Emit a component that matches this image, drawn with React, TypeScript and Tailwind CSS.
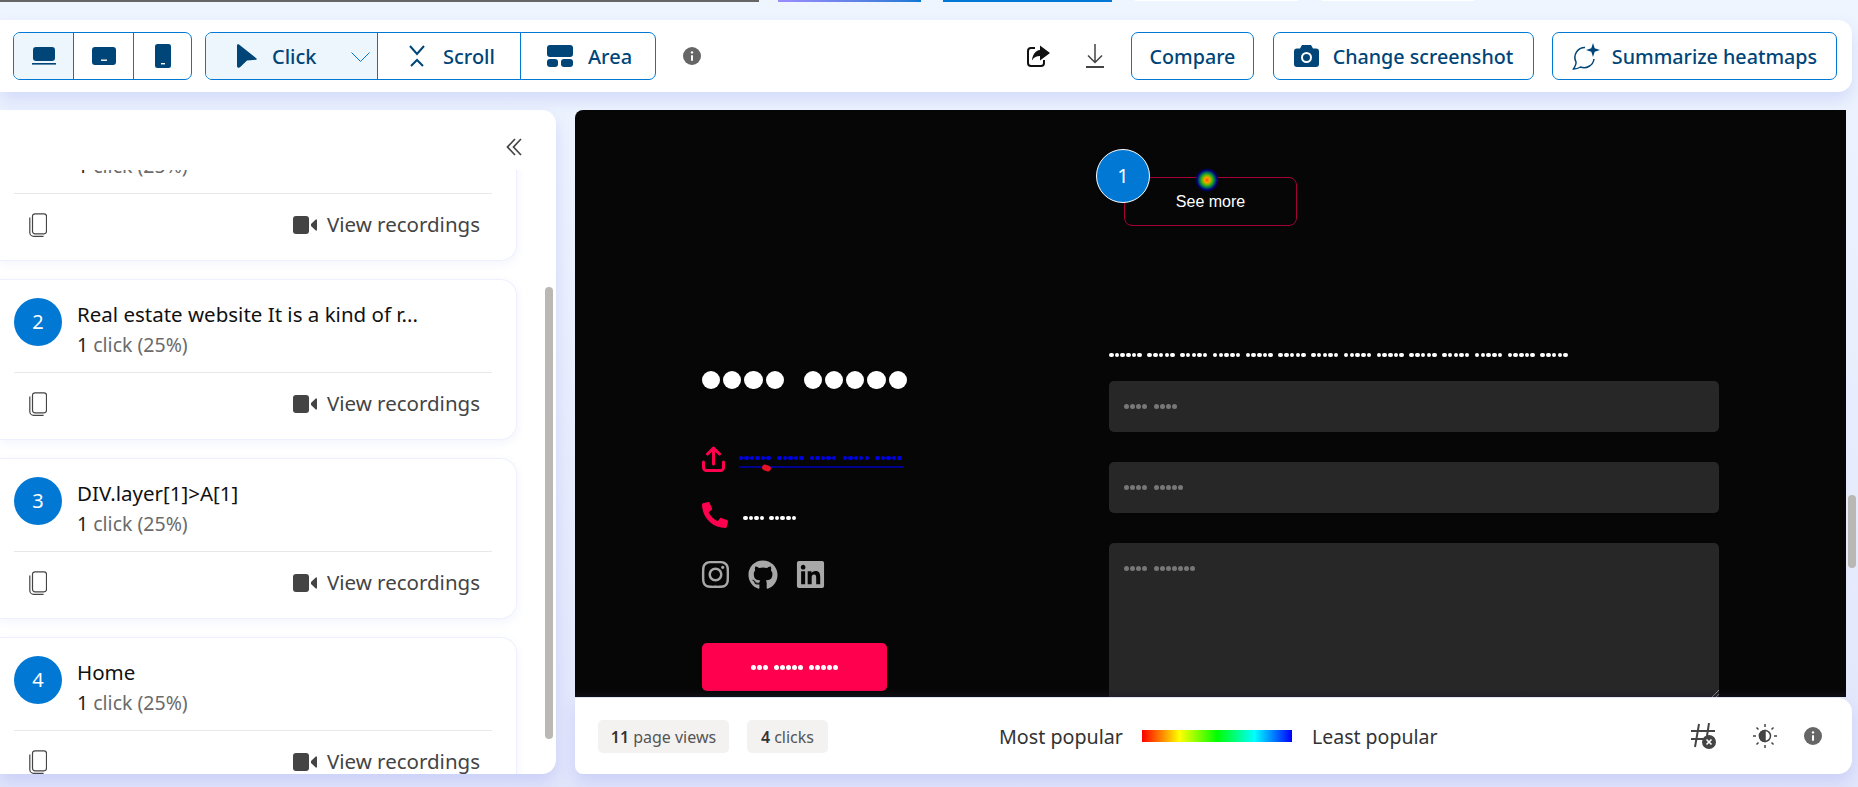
import type { ReactNode } from "react";
import { FaInstagram, FaGithub, FaLinkedin, FaPhone } from "react-icons/fa";

const NAVY = "#004578";

const Dots = ({ groups, size, gap, word, color }: { groups: number[]; size: number; gap: number; word: number; color: string }) => (
  <span className="flex items-center" style={{ gap: word }}>
    {groups.map((n, i) => (
      <span key={i} className="flex" style={{ gap }}>
        {Array.from({ length: n }).map((_, j) => (
          <span key={j} className="rounded-full shrink-0" style={{ width: size, height: size, background: color }} />
        ))}
      </span>
    ))}
  </span>
);

const CopyIcon = () => (
  <svg width="18" height="24" viewBox="0 0 18 24" fill="none" stroke="#444" strokeWidth="1.2">
    <rect x="3.5" y="0.8" width="14" height="20" rx="2.5" />
    <path d="M0.8 4.500v15a3.800 3.800 0 0 0 3.800 3.800h10" />
  </svg>
);

const CamIcon = () => (
  <svg width="24" height="18" viewBox="0 0 24 18" fill="#444">
    <rect x="0" y="0" width="16" height="18" rx="3" />
    <path d="M18 8 22.500 3.800a.8.8 0 0 1 1.500.5v9.400a.8.8 0 0 1-1.500.5L18 10z" />
  </svg>
);

const Card = ({ n, title }: { n: string; title: string }) => (
  <div className="w-[517px] h-[161px] shrink-0 bg-white rounded-r-[16px] border border-l-0 border-[#eef0fd] shadow-[0_3px_10px_rgba(90,100,230,0.07)] pl-[14px]">
    <div className="h-[93px] w-[478px] flex gap-[15px] pt-[18px] border-b border-[#e8e8e8]">
      <div className="w-12 h-12 rounded-full bg-[#0078d4] text-white flex items-center justify-center text-[20px] shrink-0">{n}</div>
      <div>
        <div className="text-[20.5px] text-[#111] leading-[30px] mt-[1px]">{title}</div>
        <div className="text-[19.5px] text-[#6b6b6b] leading-[30px] mt-[1px]"><span className="text-[#222]">1</span> click (25%)</div>
      </div>
    </div>
    <div className="flex items-center justify-between w-[478px] h-[61px] pl-[15px] pr-[12px]">
      <CopyIcon />
      <div className="flex items-center gap-[10px] text-[20.5px] text-[#444]">
        <CamIcon />
        <span>View recordings</span>
      </div>
    </div>
  </div>
);

const ModeTab = ({ icon, label, className }: { icon: ReactNode; label: string; className: string }) => (
  <div className={`flex items-center text-[20px] font-medium text-[#004578] ${className}`}>
    {icon}
    <span className="mt-[2px]">{label}</span>
  </div>
);

const InfoDot = () => (
  <svg width="18" height="18" viewBox="0 0 18 18">
    <circle cx="9" cy="9" r="9" fill="#666" />
    <rect x="8" y="8" width="2" height="6" rx="1" fill="#fff" />
    <circle cx="9" cy="5.400" r="1.200" fill="#fff" />
  </svg>
);

const FormField = ({ groups, className }: { groups: number[]; className: string }) => (
  <div className={`w-[610px] rounded-[5px] bg-[#272727] pl-[15px] ${className}`}>
    <Dots groups={groups} size={5} gap={1.100} word={6.400} color="#777" />
  </div>
);

const ToolbarOutline = ({ children, className }: { children: ReactNode; className: string }) => (
  <div className={`h-12 border border-[#0078d4] rounded-[7px] flex items-center justify-center text-[19.7px] font-medium text-[#004578] ${className}`}>
    {children}
  </div>
);

export default function App() {
  return (
    <div className="w-[1858px] h-[787px] overflow-hidden bg-gradient-to-b from-[#eef5fe] to-[#e2e6fb] font-['Noto_Sans',sans-serif] flex flex-col relative">
      {/* browser tabs peeking in at the top */}
      <div className="h-5 shrink-0 flex items-start">
        <div className="h-[2px] w-[759px] bg-[#666]" />
        <div className="ml-[19px] h-[2px] w-[143px] bg-gradient-to-r from-[#9a8cff] to-[#0078d4]" />
        <div className="ml-[22px] h-[2px] w-[169px] bg-[#0078d4]" />
        <div className="ml-[23px] h-[1px] w-[163px] bg-white" />
        <div className="ml-[24px] h-[1px] w-[152px] bg-white" />
      </div>

      {/* toolbar */}
      <div className="h-[72px] w-[1852px] shrink-0 bg-white rounded-r-[14px] flex items-center pl-[13px] pr-[15px] shadow-[0_8px_16px_rgba(110,120,235,0.2)]">
        <div className="flex w-[179px] h-12 border border-[#0078d4] rounded-[7px] overflow-hidden">
          <div className="w-[60px] bg-[#eef6fd] border-r border-[#0078d4] flex items-center justify-center">
            <svg width="24" height="18" viewBox="0 0 24 18" fill={NAVY}><rect x="1" y="0" width="22" height="14" rx="3" /><rect x="0" y="16" width="24" height="1.600" /></svg>
          </div>
          <div className="w-[60px] border-r border-[#0078d4] flex items-center justify-center">
            <svg width="24" height="18" viewBox="0 0 24 18"><rect width="24" height="18" rx="3" fill={NAVY} /><rect x="9" y="12.500" width="6" height="1.400" fill="#fff" /></svg>
          </div>
          <div className="flex-1 flex items-center justify-center">
            <svg width="16" height="24" viewBox="0 0 16 24"><rect width="16" height="24" rx="2.500" fill={NAVY} /><rect x="6" y="19" width="4" height="1.400" fill="#fff" /></svg>
          </div>
        </div>

        <div className="ml-[13px] flex w-[451px] h-12 border border-[#0078d4] rounded-[7px] overflow-hidden">
          <div className="w-[172px] shrink-0 bg-[#eef6fd] border-r border-[#0078d4] relative flex items-center pl-[31px] text-[20px] font-medium text-[#004578]">
            <svg width="20" height="24" viewBox="0 0 20 24" className="mr-[15px]"><path d="M0 1.500C0 .2 1.200-.3 2 .6L19.500 14.500c.6.5.3 1.300-.5 1.300L10 16.500 3 23.300c-1.200 1-3 .4-3-1.300z" fill={NAVY} /></svg>
            <span className="mt-[2px]">Click</span>
            <svg width="19" height="10" viewBox="0 0 19 10" className="absolute right-[7px] top-[19px]" fill="none" stroke="#0078d4" strokeWidth="1"><path d="M.5.5l9 9 9-9" /></svg>
          </div>
          <ModeTab label="Scroll" className="w-[143px] shrink-0 pl-[30px] border-r border-[#0078d4]" icon={
            <svg width="18" height="22" viewBox="0 0 18 22" className="mr-[17px]" fill="none" stroke={NAVY} strokeWidth="2"><path d="M2 1l7 8 7-8M3 21l6-6 6 6" /></svg>
          } />
          <ModeTab label="Area" className="flex-1 pl-[26px]" icon={
            <svg width="26" height="22" viewBox="0 0 26 22" className="mr-[15px]" fill={NAVY}><rect width="26" height="12" rx="3" /><rect y="14" width="11" height="8" rx="3" /><rect x="14" y="14" width="12" height="8" rx="3" /></svg>
          } />
        </div>

        <div className="ml-[27px]"><InfoDot /></div>

        <div className="ml-auto flex items-center">
          <svg width="23" height="22" viewBox="0 0 23 22" className="mr-[36px]"><path d="M8 3H4a3 3 0 0 0-3 3v12a3 3 0 0 0 3 3h10a3 3 0 0 0 3-3v-3" fill="none" stroke="#111" strokeWidth="2" /><path d="M13 .5l10 7.500-10 7.500v-4.500c-3.500 0-6 1-8 4.500.5-6 3.500-10 8-10.500z" fill="#111" /></svg>
          <svg width="18" height="24" viewBox="0 0 18 24" className="mr-[27px]" fill="none" stroke="#444"><path d="M9 0v18M2 11.500l7 7 7-7" strokeWidth="1.500" /><path d="M0 23h18" strokeWidth="2" /></svg>
          <ToolbarOutline className="w-[123px]"><span className="mt-[2px]">Compare</span></ToolbarOutline>
          <ToolbarOutline className="ml-[19px] w-[261px]">
            <svg width="25" height="22" viewBox="0 0 25 22" className="mr-[14px]"><path d="M8 0h9l2 3.500h3a3 3 0 0 1 3 3V19a3 3 0 0 1-3 3H3a3 3 0 0 1-3-3V6.500a3 3 0 0 1 3-3h3z" fill={NAVY} /><circle cx="12.500" cy="12.500" r="4.500" fill="none" stroke="#fff" strokeWidth="2" /></svg>
            <span className="mt-[2px]">Change screenshot</span>
          </ToolbarOutline>
          <ToolbarOutline className="ml-[18px] w-[285px]">
            <svg width="28" height="27" viewBox="0 0 28 27" className="mr-[12px]" fill="none" stroke={NAVY} strokeWidth="1.500"><path d="M13 4.500A10 10 0 0 0 4 19c.3 1.200-1 4.500-2.500 7 3 0 5.500-1 7-2A10 10 0 0 0 22 16" /><path d="M21 0l1.700 5.300L28 7l-5.300 1.700L21 14l-1.700-5.300L14 7l5.300-1.700z" fill={NAVY} stroke="none" /></svg>
            <span className="mt-[2px]">Summarize heatmaps</span>
          </ToolbarOutline>
        </div>
      </div>

      <div className="flex mt-[18px] h-[664px] shrink-0">
        {/* left list panel */}
        <div className="w-[556px] h-full bg-white rounded-r-[14px] overflow-hidden relative flex flex-col shadow-[0_8px_16px_rgba(110,120,235,0.2)]">
          <div className="h-[60px] shrink-0 flex justify-end items-start pt-[28px] pr-[34px]">
            <svg width="16" height="18" viewBox="0 0 16 18" fill="none" stroke="#444" strokeWidth="1.700"><path d="M9 1L1.500 9 9 17M15 1L7.500 9l7.500 8" /></svg>
          </div>
          <div className="flex-1 overflow-hidden">
            <div className="flex flex-col gap-[18px] -mt-[70px]">
              <Card n="1" title="See more" />
              <Card n="2" title="Real estate website It is a kind of r..." />
              <Card n="3" title="DIV.layer[1]>A[1]" />
              <Card n="4" title="Home" />
            </div>
          </div>
          <div className="absolute left-[545px] top-[177px] w-2 h-[452px] rounded-full bg-[#b9b8b4]" />
        </div>

        <div className="ml-[19px] w-[1277px] flex flex-col">
          {/* heatmap screenshot */}
          <div className="h-[587px] w-[1271px] bg-[#060607] rounded-tl-[8px] relative overflow-hidden flex flex-col">
            <div className="ml-[549px] mt-[67px] w-[173px] h-[49px] shrink-0 border border-[#a30036] rounded-[8px] flex items-center justify-center text-white text-[16px] font-['Liberation_Sans',sans-serif]">See more</div>

            <div className="flex mt-[125px] pl-[127px]">
              <div className="w-[407px] shrink-0 pt-[20px]">
                <Dots groups={[4, 5]} size={18.200} gap={3} word={20} color="#fff" />

                <div className="mt-[57px] flex items-center h-[26px]">
                  <svg width="23" height="26" viewBox="0 0 23 26" fill="none" stroke="#ff004f" strokeWidth="3" strokeLinecap="round" strokeLinejoin="round">
                    <path d="M1.500 16v5.500a3 3 0 0 0 3 3h14a3 3 0 0 0 3-3V16M11.500 18V2M5.500 8l6-6 6 6" />
                  </svg>
                  <div className="ml-[14px] w-[165px] border-b-2 border-[#00008f] pb-[6px] mt-[6px] relative">
                    <Dots groups={[6, 5, 5, 5, 5]} size={4.400} gap={1.100} word={6.400} color="#0000e6" />
                    <div className="absolute left-[23px] top-[9px] w-[9px] h-[6px] rounded-full rotate-[20deg] bg-[#e81123]" />
                  </div>
                </div>

                <div className="mt-[30px] flex items-center h-[26px]">
                  <FaPhone size={26} className="-scale-x-100 text-[#ff004f]" />
                  <div className="ml-[15px] mt-[6px]"><Dots groups={[4, 5]} size={4.500} gap={1.100} word={5} color="#fff" /></div>
                </div>

                <div className="mt-[31px] -ml-[2px] flex items-center gap-[17px] text-[#a8a8a8]">
                  <FaInstagram size={31} />
                  <FaGithub size={30} />
                  <FaLinkedin size={31} />
                </div>

                <div className="mt-[53px] w-[185px] h-12 rounded-[5px] bg-[#ff004f] flex items-center justify-center">
                  <Dots groups={[3, 5, 5]} size={5} gap={1} word={6} color="#fff" />
                </div>
              </div>

              <div className="flex flex-col items-start">
                <div className="h-2 flex items-center">
                  <Dots groups={[6, 5, 5, 5, 5, 5, 5, 5, 5, 5, 5, 5, 5, 5]} size={4.500} gap={1.200} word={5.500} color="#fff" />
                </div>
                <FormField groups={[4, 4]} className="mt-[22px] h-[51px] flex items-center" />
                <FormField groups={[4, 5]} className="mt-[30px] h-[51px] flex items-center" />
                <FormField groups={[4, 7]} className="mt-[30px] h-[200px] pt-[23px]" />
              </div>
            </div>

            <div className="absolute left-[521px] top-[39px] w-[54px] h-[54px] rounded-full bg-[#0078d4] border border-white flex items-center justify-center text-white text-[20px]">1</div>
            <div className="absolute left-[620px] top-[58px] w-6 h-6 rounded-full bg-[radial-gradient(circle_closest-side,#ff5500_0%,#ffa000_22%,#55bb00_42%,#007755_62%,#000080_82%,transparent_100%)]" />
            <svg width="7" height="7" viewBox="0 0 7 7" className="absolute left-[1137px] bottom-0" stroke="#999" strokeWidth="1"><path d="M0 7l7-7M4 7l3-3" /></svg>
            <div className="absolute left-0 right-0 bottom-0 h-2 bg-gradient-to-b from-transparent to-[#1a1a2a]/40" />
          </div>

          {/* legend bar */}
          <div className="mt-[1px] h-[76px] w-[1277px] bg-white rounded-r-[14px] rounded-bl-[8px] flex items-center pl-[23px] pr-[30px] shadow-[0_8px_16px_rgba(110,120,235,0.2)]">
            <div className="w-[131px] h-[33px] bg-[#f3f2f1] rounded-[5px] flex items-center justify-center pt-[2px] text-[16px] text-[#555]"><span className="text-[#333] font-semibold mr-1">11</span>page views</div>
            <div className="ml-[18px] w-[81px] h-[33px] bg-[#f3f2f1] rounded-[5px] flex items-center justify-center pt-[2px] text-[16px] text-[#555]"><span className="text-[#333] font-semibold mr-1">4</span>clicks</div>
            <div className="ml-[171px] w-[123px] mt-[2px] text-[19.700px] text-[#333] whitespace-nowrap">Most popular</div>
            <div className="ml-[20px] w-[150px] h-3 bg-[linear-gradient(90deg,#f00_0%,#ff0_25%,#0f0_50%,#0ff_75%,#00f_100%)]" />
            <div className="ml-[20px] mt-[2px] text-[19.500px] text-[#333] whitespace-nowrap">Least popular</div>
            <div className="ml-auto flex items-center">
              <svg width="27" height="26" viewBox="0 0 27 26" className="mr-[36px]" fill="none" stroke="#444" strokeWidth="2"><path d="M9 1L5 24M19 0l-2 13M1 8h24M1 16h14" /><circle cx="19" cy="19" r="7" fill="#444" stroke="none" /><path d="M16.500 16.500l5 5M21.500 16.500l-5 5" stroke="#fff" strokeWidth="1.600" /></svg>
              <svg width="24" height="24" viewBox="0 0 24 24" className="mr-[27px]" fill="none" stroke="#444" strokeWidth="1.500"><circle cx="12" cy="12" r="5.500" /><path d="M12 6.500a5.500 5.500 0 0 0 0 11z" fill="#444" /><path d="M12 0v3M12 21v3M0 12h3M21 12h3M3.500 3.500l2 2M18.500 18.500l2 2M3.500 20.500l2-2M18.500 5.500l2-2" /></svg>
              <InfoDot />
            </div>
          </div>
        </div>
      </div>

      {/* page scrollbar thumb */}
      <div className="absolute left-[1848px] top-[495px] w-2 h-[73px] rounded-full bg-[#b9b8b4]" />
    </div>
  );
}
